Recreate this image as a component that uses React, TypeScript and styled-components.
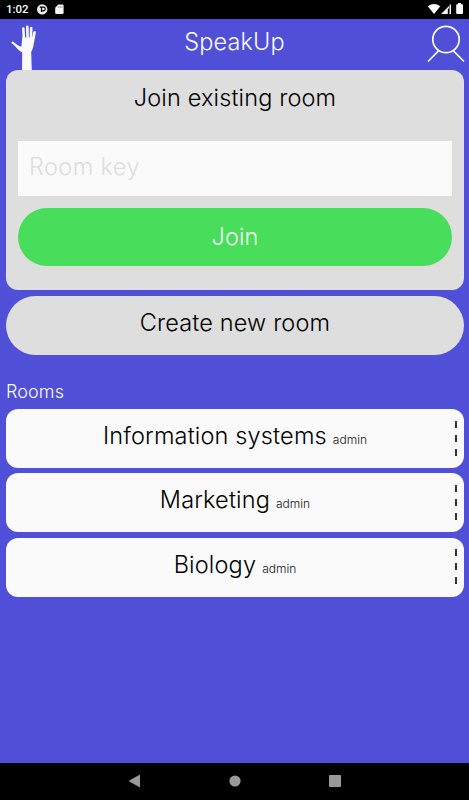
import React from "react";
import styled, { createGlobalStyle } from "styled-components";

const GlobalStyle = createGlobalStyle`
  * { box-sizing: border-box; }
  html, body { margin: 0; padding: 0; overflow: hidden; }
  body { background: #4f4fd7; font-family: Inter, "Liberation Sans", sans-serif; }
  button, input { font: inherit; border: 0; padding: 0; margin: 0; }
`;

const Screen = styled.div`
  display: flex;
  flex-direction: column;
  width: 469px;
  height: 800px;
  background: #4f4fd7;
`;

const StatusBar = styled.div`
  display: flex;
  align-items: center;
  justify-content: space-between;
  flex: none;
  height: 18.5px;
  padding: 0 5px 0 6px;
  background: #000;
  color: #fff;
`;

const StatusGroup = styled.div`
  display: flex;
  align-items: center;
  svg { display: block; }
`;

const Clock = styled.span`
  width: 31px;
  font: 500 11.5px/18px Roboto, sans-serif;
`;

const Header = styled.header`
  display: grid;
  grid-template-columns: 60px 1fr 60px;
  flex: none;
  height: 51.5px;
  svg { display: block; }
`;

const Title = styled.h1`
  margin: 0;
  padding-top: 8px;
  text-align: center;
  color: #fafafa;
  font-size: 23.5px;
  line-height: 30px;
  font-weight: 350;
  letter-spacing: 0.15px;
`;

const Content = styled.main`
  display: flex;
  flex-direction: column;
  flex: 1;
  padding: 0 5px 0 6px;
`;

const JoinCard = styled.section`
  display: flex;
  flex-direction: column;
  height: 220px;
  padding: 12px;
  border-radius: 12px;
  background: #dedede;
`;

const CardTitle = styled.h2`
  margin: 0;
  padding-top: 1px;
  height: 58.5px;
  text-align: center;
  font-size: 23.5px;
  line-height: 30px;
  font-weight: 300;
  letter-spacing: 0.14px;
`;

const KeyInput = styled.input`
  height: 55.5px;
  padding: 0 12px 4px 11px;
  background: #fafafa;
  font-size: 23.5px;
  font-weight: 300;
  border-radius: 0;
  outline: 0;
  letter-spacing: 0.4px;
  &::placeholder { color: #dedede; opacity: 1; }
`;

const PillButton = styled.button<{ $tone: "green" | "grey" }>`
  flex: none;
  height: ${(p) => (p.$tone === "green" ? "58px" : "59px")};
  margin-top: ${(p) => (p.$tone === "green" ? "12px" : "6px")};
  padding-bottom: ${(p) => (p.$tone === "green" ? "0" : "6px")};
  border-radius: 30px;
  background: ${(p) => (p.$tone === "green" ? "#48dd5a" : "#dedede")};
  color: ${(p) => (p.$tone === "green" ? "#fafafa" : "#000")};
  font-size: 23.5px;
  line-height: 30px;
  font-weight: 300;
  letter-spacing: 0.14px;
`;

const SectionLabel = styled.h3`
  margin: 25px 0 6px;
  color: #fafafa;
  font-size: 18px;
  line-height: 23px;
  font-weight: 350;
  letter-spacing: 0.1px;
`;

const RoomList = styled.div`
  display: flex;
  flex-direction: column;
  gap: 5.4px;
`;

const RoomRow = styled.div`
  display: grid;
  grid-template-columns: 1fr 12px;
  height: 59px;
  border-radius: 12px;
  background: #fafafa;
`;

const RoomText = styled.div`
  display: flex;
  justify-content: center;
  align-items: baseline;
  gap: 6px;
  padding: 12px 0 0 12px;
  line-height: 30px;
`;

const RoomName = styled.span`
  font-size: 23.5px;
  font-weight: 300;
  letter-spacing: 0.16px;
`;

const Role = styled.span`
  font-size: 12px;
  font-weight: 300;
  color: #111;
`;

const Handle = styled.div`
  display: flex;
  flex-direction: column;
  gap: 7px;
  padding: 11.5px 0 0 3px;
`;

const Dash = styled.i`
  width: 2px;
  height: 7px;
  background: #333;
`;

const NavBar = styled.nav`
  display: flex;
  justify-content: center;
  align-items: center;
  gap: 86px;
  flex: none;
  height: 37px;
  padding-bottom: 1px;
  background: #000;
  svg { display: block; }
`;

const rooms = ["Information systems", "Marketing", "Biology"];

const Hand = () => (
  <svg width="60" height="52" viewBox="0 18.5 60 52" fill="none" stroke="#fafafa" strokeLinecap="round" strokeLinejoin="round">
    <path d="M22 71 22.2 52C19.8 51 16.5 47.5 13.5 43.5L21.4 46.2 22.3 37H34.2L33.4 45.5C33 48.6 31.4 50 31.2 52L31.8 71Z" fill="#fafafa" stroke="none" />
    <path d="M12.6 42.2 21.4 49" strokeWidth="2.2" />
    <path d="M23.3 28 24.1 42M27.3 26.2 27.7 42M31.2 27.5 30.8 42M34.6 31.7 32.7 42" strokeWidth="2.6" />
  </svg>
);

const Person = () => (
  <svg width="60" height="52" viewBox="409 18.5 60 52" fill="none" stroke="#fafafa" strokeWidth="1.7">
    <circle cx="446" cy="39" r="13.2" />
    <path d="M438.8 50.2 428 61M453.2 50.2 464 61" />
  </svg>
);

export default function App() {
  return (
    <>
      <GlobalStyle />
      <Screen>
        <StatusBar>
          <StatusGroup>
            <Clock>1:02</Clock>
            <svg width="30" height="18" viewBox="37 0 30 18">
              <circle cx="42.2" cy="9.4" r="5.2" fill="#eee" />
              <path d="M39.8 7.2H43.5Q45.2 7.2 45.2 9T43.3 10.8H41.8M41.5 7.3V12" fill="none" stroke="#000" strokeWidth="1.2" />
              <path d="M58.2 4.6H62.5Q63.6 4.6 63.6 5.7V13Q63.6 14 62.6 14H56.2Q55.2 14 55.2 13V7.7Z" fill="#f5f5f5" />
              <path d="M58.3 6.2V8M60.2 6.2V8M62 6.2V8" stroke="#777" strokeWidth=".7" />
            </svg>
          </StatusGroup>
          <svg width="38" height="18" viewBox="426 0 38 18" fill="#fff">
            <path d="M427.8 6.2Q434 1.8 440.3 6.2L434 14Z" />
            <path d="M441 14 451 4V14H449V8L447.8 9.2V14Z" />
            <path d="M449.5 6V13.5" stroke="#777" />
            <path d="M456.2 5Q456.2 4.2 457 4.2H458V3H461V4.2H462Q463 4.2 463 5V13Q463 14 462 14H457.2Q456.2 14 456.2 13Z" />
          </svg>
        </StatusBar>
        <Header>
          <Hand />
          <Title>SpeakUp</Title>
          <Person />
        </Header>
        <Content>
          <JoinCard>
            <CardTitle>Join existing room</CardTitle>
            <KeyInput placeholder="Room key" aria-label="Room key" />
            <PillButton $tone="green">Join</PillButton>
          </JoinCard>
          <PillButton $tone="grey">Create new room</PillButton>
          <SectionLabel>Rooms</SectionLabel>
          <RoomList>
            {rooms.map((name) => (
              <RoomRow key={name}>
                <RoomText>
                  <RoomName>{name}</RoomName>
                  <Role>admin</Role>
                </RoomText>
                <Handle>
                  <Dash />
                  <Dash />
                  <Dash />
                </Handle>
              </RoomRow>
            ))}
          </RoomList>
        </Content>
        <NavBar>
          <svg width="14" height="14" fill="#999"><path d="M.5 7 12 .5V13.5Z" /></svg>
          <svg width="14" height="14" fill="#999"><circle cx="7" cy="7" r="5.6" /></svg>
          <svg width="14" height="14" fill="#999"><rect x="1" y="1" width="12" height="12" rx=".7" /></svg>
        </NavBar>
      </Screen>
    </>
  );
}
